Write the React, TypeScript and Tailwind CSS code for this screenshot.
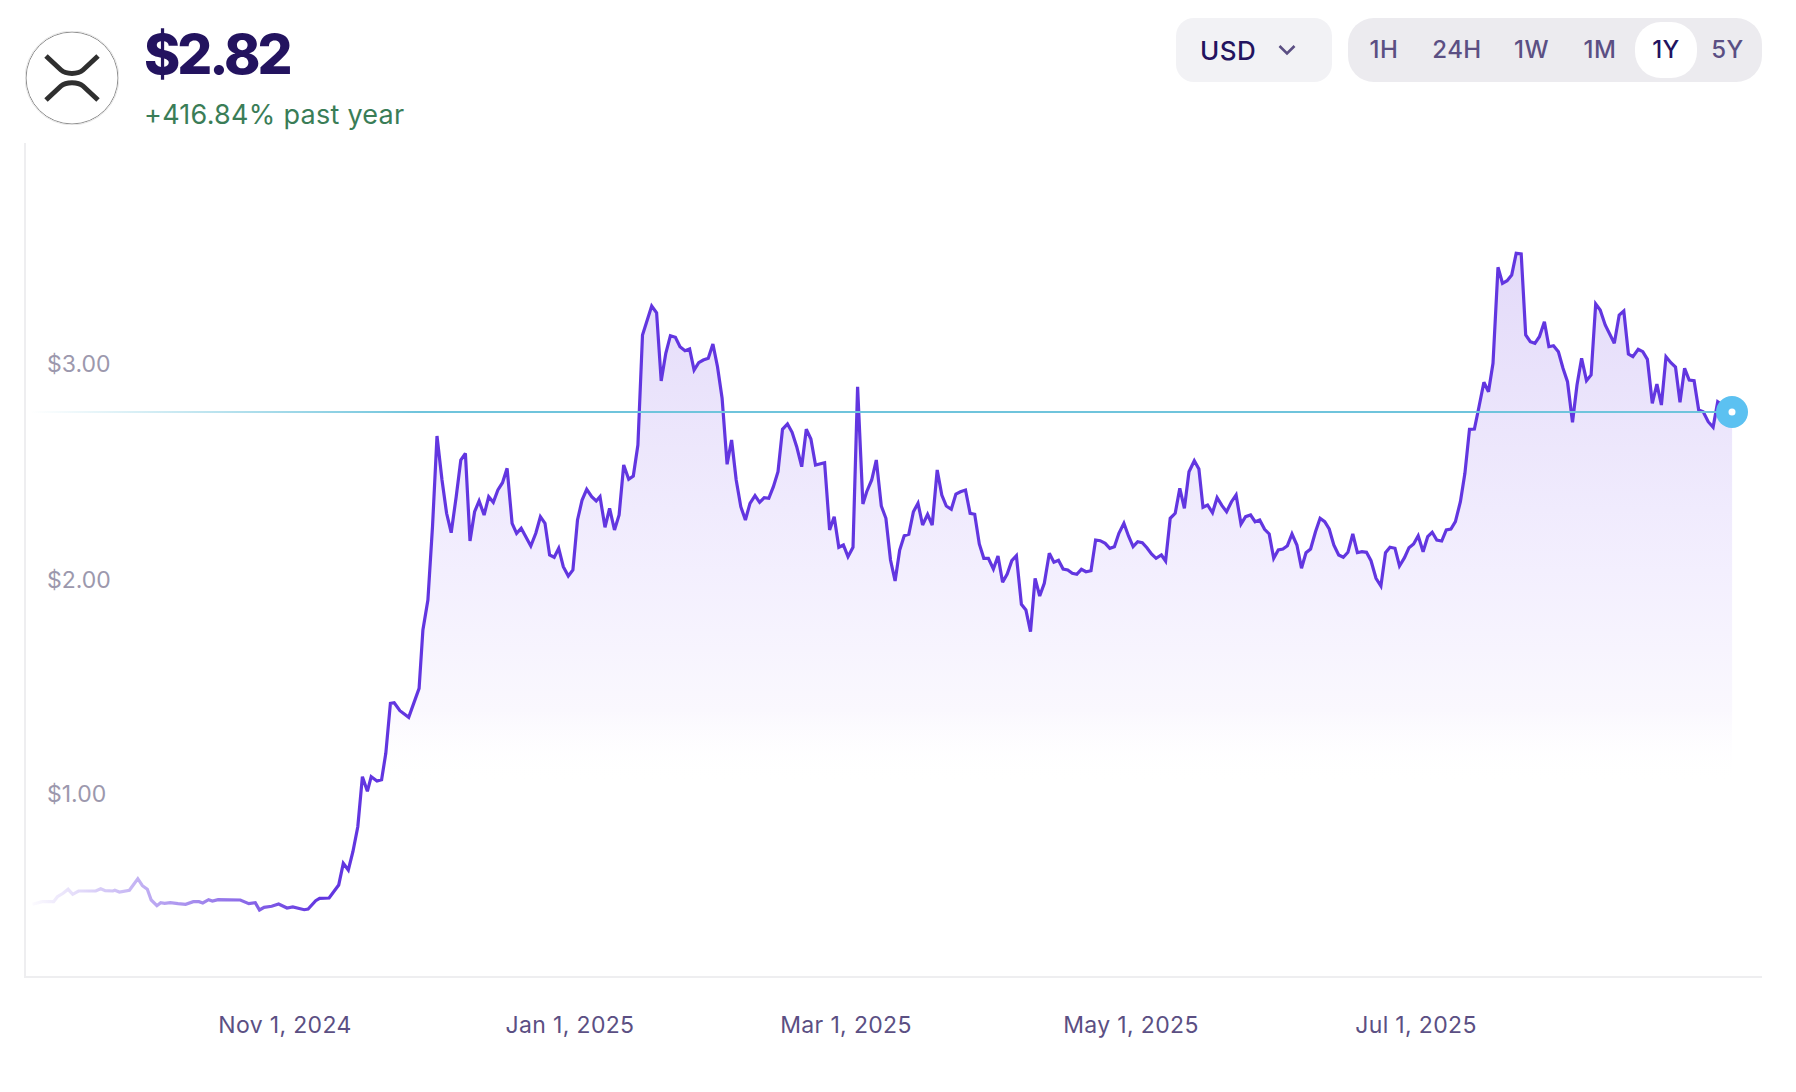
import React from "react";

type P = [number, number];
const map = (pts: P[], x0: number, y0: number, sx: number, sy: number): P[] =>
  pts.map(([x, y]) => [x0 + x / sx, y0 + y / sy]);

const a: P[] = [[85,913],[110,905],[140,905],[150,890],[165,880],[178,868],[190,883],[205,873],[250,873],[263,866],[275,872],[295,873],[300,871],[312,876],[338,871],[360,836],[372,857],[385,868],[395,900],[410,917],[420,908],[430,910],[445,908],[465,911],[485,913],[505,905],[520,905],[530,909],[545,899],[555,903],[570,899],[628,900],[650,911],[667,908],[678,930],[690,922],[710,919],[728,912],[750,924],[765,921],[795,929],[805,927],[825,902],[835,895],[860,894],[885,855],[897,790],[910,810],[922,755],[935,680],[947,530],[960,574],[970,530],[985,543],[997,539],[1008,460],[1020,310],[1030,308],[1045,332],[1068,352],[1095,265],[1105,90]];
const b: P[] = [[1118,1410],[1130,1190],[1142,918],[1155,1050],[1167,1150],[1179,1208],[1192,1100],[1204,990],[1216,970],[1228,1233],[1240,1145],[1252,1113],[1265,1155],[1277,1100],[1289,1117],[1301,1080],[1313,1058],[1325,1015],[1338,1180],[1350,1210],[1362,1195],[1387,1248],[1400,1210],[1412,1160],[1424,1180],[1436,1275],[1448,1282],[1460,1255],[1472,1310],[1485,1338],[1497,1320],[1509,1170],[1521,1110],[1533,1078],[1546,1100],[1558,1113]];
const c: P[] = [[0,680],[13,772],[25,715],[38,780],[50,735],[62,585],[75,628],[87,618],[99,525],[111,195],[135,108],[148,128],[160,333],[172,250],[184,197],[197,202],[209,230],[222,242],[234,237],[246,300],[258,278],[270,270],[283,265],[295,222],[307,290],[319,385],[332,583],[344,510],[356,630],[368,710],[380,750],[392,700],[405,677],[417,697],[429,683],[441,685],[453,650],[465,605],[477,478],[490,462],[502,487],[514,530],[527,590],[539,478],[551,507],[563,585],[587,578],[600,780],[612,740],[624,832],[636,825],[648,860],[661,832],[673,350],[687,702],[697,665],[710,630],[722,570],[735,708],[747,745],[759,870],[771,933],[783,840],[795,797],[807,793],[819,725],[831,700],[843,765],[856,733],[868,765],[881,600],[893,675],[905,708],[918,718],[930,672],[942,665],[955,660],[967,730],[979,733],[991,822],[1003,865],[1015,865],[1028,897],[1040,858],[1052,937],[1064,912],[1076,872],[1088,857],[1101,1003],[1113,1020],[1125,1085],[1137,925],[1149,978],[1161,940],[1174,850],[1186,877],[1198,871],[1210,897],[1222,900],[1234,910],[1246,913],[1258,898],[1270,905],[1283,902],[1295,810],[1307,812],[1320,820],[1332,835],[1344,830],[1356,790],[1369,760],[1381,798],[1393,830],[1405,815],[1417,818],[1429,833],[1441,852],[1453,865],[1467,855],[1478,873],[1490,745],[1503,730],[1515,655],[1527,715],[1539,605],[1553,572],[1565,597]];
const d: P[] = [[8,832],[20,825],[33,848],[45,803],[58,827],[70,845],[83,815],[95,795],[108,882],[120,860],[133,855],[145,875],[157,870],[170,898],[182,912],[194,985],[206,960],[218,957],[230,947],[242,912],[255,945],[267,1015],[279,968],[291,957],[304,905],[316,865],[328,875],[340,897],[352,945],[365,975],[377,982],[389,967],[402,912],[414,968],[426,965],[438,967],[450,992],[463,1045],[476,1068],[488,968],[500,952],[513,955],[525,1008],[538,983],[550,953],[562,942],[574,917],[587,965],[599,920],[611,907],[623,930],[636,933],[648,900],[660,897],[672,875],[685,815],[697,730],[709,598],[722,597],[734,530],[747,457],[759,485],[771,400],[784,112],[796,160],[808,152],[820,135],[832,70],[845,72],[857,315],[869,335],[881,340],[893,320],[906,275],[918,350],[930,347],[943,365],[955,415],[967,455],[980,577],[992,465],[1004,385],[1017,452],[1029,435],[1041,222],[1053,240],[1066,285],[1090,340],[1103,255],[1115,243],[1127,372],[1139,380],[1153,358],[1165,365],[1177,388],[1190,520],[1202,462],[1214,525],[1226,380],[1239,398],[1251,411],[1263,517],[1275,415],[1287,450],[1300,452],[1312,540],[1324,545],[1337,575],[1350,592],[1362,515],[1400,546]];

const pts: P[] = [
  ...map(a, 0, 600, 2.613, 3),
  ...map(b, 0, 130, 2.613, 3),
  ...map(c, 600, 270, 2.613, 3),
  ...map(d, 1200, 230, 2.631, 3),
];
const line = pts.map(([x, y]) => x.toFixed(1) + "," + y.toFixed(1)).join(" ");
const lastX = pts[pts.length - 1][0];
const area = line + " " + lastX.toFixed(1) + ",790 " + pts[0][0].toFixed(1) + ",790";

const ranges: [string, string][] = [
  ["1H", "w-[64px]"],
  ["24H", "w-[82px]"],
  ["1W", "w-[67px]"],
  ["1M", "w-[70px]"],
  ["1Y", "w-[62px]"],
  ["5Y", "w-[61px]"],
];
const xLabels: [string, number][] = [
  ["Nov 1, 2024", 285],
  ["Jan 1, 2025", 570],
  ["Mar 1, 2025", 846],
  ["May 1, 2025", 1131],
  ["Jul 1, 2025", 1416],
];
const yLabels: [string, number][] = [
  ["$3.00", 364],
  ["$2.00", 580],
  ["$1.00", 794],
];

function XrpLogo() {
  return (
    <svg width="94" height="94" viewBox="0 0 94 94" className="shrink-0">
      <circle cx="47" cy="47" r="46" fill="#fff" stroke="#8d8d8d" strokeWidth="1" />
      <circle cx="47" cy="47" r="47" fill="none" stroke="#e8e8e8" strokeWidth="1" />
      <path d="M21 25 L36 39 C41 43.5 53 43.5 58 39 L73 25" fill="none" stroke="#2f2f2f" strokeWidth="5" />
      <path d="M21 69 L36 55 C41 50.5 53 50.5 58 55 L73 69" fill="none" stroke="#2f2f2f" strokeWidth="5" />
    </svg>
  );
}

export default function App() {
  return (
    <div className="w-[1796px] h-[1092px] bg-white overflow-hidden font-['Inter',sans-serif]">
      <header className="h-[143px] flex justify-between items-start pl-[25px] pr-[34px]">
        <div className="flex items-start gap-[25px] pt-[31px]">
          <XrpLogo />
          <div className="-mt-[15px]">
            <div className="text-[55px] leading-[76px] font-extrabold tracking-[-0.055em] text-[#23135f]">$2.82</div>
            <div className="mt-[6px] text-[27px] leading-[34px] tracking-[0.01em] text-[#3a7d57]">+416.84% past year</div>
          </div>
        </div>
        <div className="flex gap-[16px] pt-[18px]">
          <div className="w-[156px] h-[64px] rounded-[18px] bg-[#f2f2f5] flex items-center pl-[24px] gap-[21px]">
            <span className="text-[26px] font-medium tracking-[0.02em] text-[#23135f]">USD</span>
            <svg width="20" height="12" viewBox="0 0 20 12" fill="none" stroke="#5b4f83" strokeWidth="2.6">
              <path d="M2.5 2 L10 9.5 L17.5 2" />
            </svg>
          </div>
          <div className="h-[64px] rounded-[26px] bg-[#ecebef] flex items-center px-[4px] w-[414px]">
            {ranges.map(([r, w]) => (
              <div
                key={r}
                className={
                  w +
                  " h-[56px] shrink-0 flex items-center justify-center text-[24px] font-medium tracking-[0.02em] " +
                  (r === "1Y" ? "rounded-[26px] bg-white text-[#23135f]" : "text-[#5b4f83]")
                }
              >
                {r}
              </div>
            ))}
          </div>
        </div>
      </header>

      <div className="relative ml-[24px] mr-[34px] h-[835px] border-l-2 border-b-2 border-[#eeeef0]">
        <svg
          className="absolute -left-[2px] top-0"
          width="1738"
          height="833"
          viewBox="24 143 1738 833"
          fill="none"
        >
          <defs>
            <linearGradient id="fillG" gradientUnits="userSpaceOnUse" x1="0" y1="250" x2="0" y2="785">
              <stop offset="0" stopColor="#e3daf9" />
              <stop offset="0.6" stopColor="#f3effe" />
              <stop offset="0.86" stopColor="#faf8fe" />
              <stop offset="1" stopColor="#ffffff" stopOpacity="0" />
            </linearGradient>
            <linearGradient id="lineG" gradientUnits="userSpaceOnUse" x1="26" y1="0" x2="320" y2="0">
              <stop offset="0" stopColor="#6236e0" stopOpacity="0" />
              <stop offset="1" stopColor="#6236e0" />
            </linearGradient>
            <linearGradient id="hG" gradientUnits="userSpaceOnUse" x1="30" y1="0" x2="420" y2="0">
              <stop offset="0" stopColor="#6fc4dc" stopOpacity="0" />
              <stop offset="1" stopColor="#6fc4dc" />
            </linearGradient>
          </defs>
          <polygon points={area} fill="url(#fillG)" />
          <polyline points={line} stroke="url(#lineG)" strokeWidth="3.2" strokeLinejoin="miter" strokeMiterlimit="3" />
          <rect x="30" y="411" width="1702" height="2" fill="url(#hG)" />
          <circle cx="1732" cy="412" r="16" fill="#5cc1f1" />
          <circle cx="1732" cy="412" r="3.5" fill="#fff" />
        </svg>
        {yLabels.map(([t, y]) => (
          <span
            key={t}
            className="absolute left-[21px] -translate-y-1/2 text-[23px] leading-none text-[#9c98ad]"
            style={{ top: y - 143 }}
          >
            {t}
          </span>
        ))}
      </div>

      <div className="relative h-[60px]">
        {xLabels.map(([t, x]) => (
          <span
            key={t}
            className="absolute -translate-x-1/2 -translate-y-1/2 text-[23px] tracking-[0.015em] leading-none whitespace-nowrap text-[#5b4f83]"
            style={{ left: x, top: 47 }}
          >
            {t}
          </span>
        ))}
      </div>
    </div>
  );
}
